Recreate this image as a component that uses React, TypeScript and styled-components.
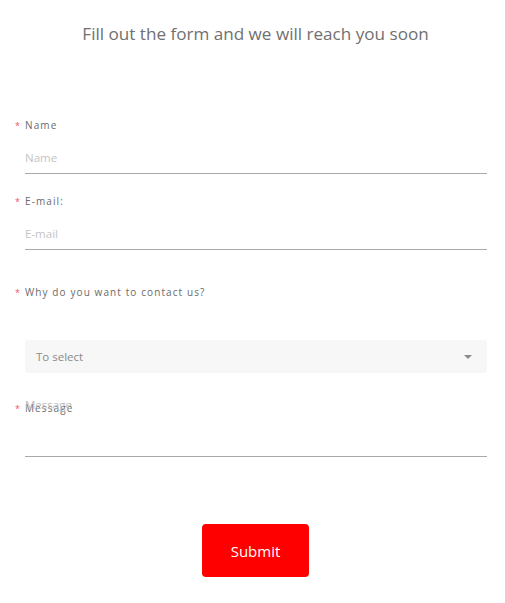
import React from "react";
import styled, { createGlobalStyle } from "styled-components";

const Global = createGlobalStyle`
  html, body { margin: 0; padding: 0; background: #fff; }
  body { font-family: "Open Sans", "Noto Sans", sans-serif; }
  * { box-sizing: border-box; }
`;

const Page = styled.div`
  width: 505px;
  padding: 0 18px 0 15px;
`;

const Title = styled.h1`
  margin: 0;
  padding: 21px 0 0 9px;
  height: 118px;
  text-align: center;
  font-weight: 400;
  font-size: 17.1px;
  line-height: 26px;
  color: #707070;
`;

const Form = styled.form`
  display: flex;
  flex-direction: column;
`;

const Field = styled.div<{ $mb: number }>`
  display: flex;
  flex-direction: column;
  margin-bottom: ${(p) => p.$mb}px;
`;

const Label = styled.label<{ $mb: number }>`
  display: flex;
  align-items: center;
  height: 14px;
  font-size: 10px;
  letter-spacing: 1.1px;
  color: #6a6a6a;
  margin-bottom: ${(p) => p.$mb}px;
`;

const Star = styled.span`
  width: 10px;
  color: #f0506e;
  font-size: 9px;
  letter-spacing: 0;
`;

const Input = styled.input`
  margin-left: 10px;
  border: 0;
  border-bottom: 1px solid #a9a9a9;
  outline: none;
  height: 32px;
  padding: 0 0 1px;
  font-family: inherit;
  font-size: 11.5px;
  color: #333;
  background: transparent;
  &::placeholder { color: #c4c4c4; }
`;

const Select = styled.div`
  margin-left: 10px;
  height: 33px;
  border-radius: 3px;
  background: #f7f7f7;
  display: flex;
  align-items: center;
  justify-content: space-between;
  padding: 0 15px 0 11px;
  font-size: 11.5px;
  color: #8a8a8a;
`;

const Caret = styled.span`
  width: 0;
  height: 0;
  border-left: 4px solid transparent;
  border-right: 4px solid transparent;
  border-top: 4px solid #8a8a8a;
`;

const TextArea = styled.textarea`
  margin-left: 10px;
  margin-top: -18px;
  height: 60px;
  border: 0;
  border-bottom: 1px solid #a9a9a9;
  outline: none;
  resize: none;
  padding: 0;
  font-family: inherit;
  font-size: 11.5px;
  line-height: 16px;
  background: transparent;
  &::placeholder { color: #b9b9b9; }
`;

const ButtonRow = styled.div`
  display: flex;
  justify-content: center;
  padding-left: 9px;
`;

const Submit = styled.button`
  width: 107px;
  height: 53px;
  border: 0;
  border-radius: 4px;
  background: #ff0000;
  color: #fff;
  font-family: inherit;
  font-size: 15px;
  cursor: pointer;
`;

export default function App() {
  return (
    <>
      <Global />
      <Page>
        <Title>Fill out the form and we will reach you soon</Title>
        <Form onSubmit={(e) => e.preventDefault()}>
          <Field $mb={20}>
            <Label $mb={10}>
              <Star>*</Star>Name
            </Label>
            <Input placeholder="Name" />
          </Field>
          <Field $mb={35}>
            <Label $mb={10}>
              <Star>*</Star>E-mail:
            </Label>
            <Input placeholder="E-mail" />
          </Field>
          <Field $mb={28}>
            <Label $mb={41}>
              <Star>*</Star>Why do you want to contact us?
            </Label>
            <Select>
              <span>To select</span>
              <Caret />
            </Select>
          </Field>
          <Field $mb={67}>
            <Label $mb={0}>
              <Star>*</Star>Message
            </Label>
            <TextArea placeholder="Message" />
          </Field>
          <ButtonRow>
            <Submit type="submit">Submit</Submit>
          </ButtonRow>
        </Form>
      </Page>
    </>
  );
}
